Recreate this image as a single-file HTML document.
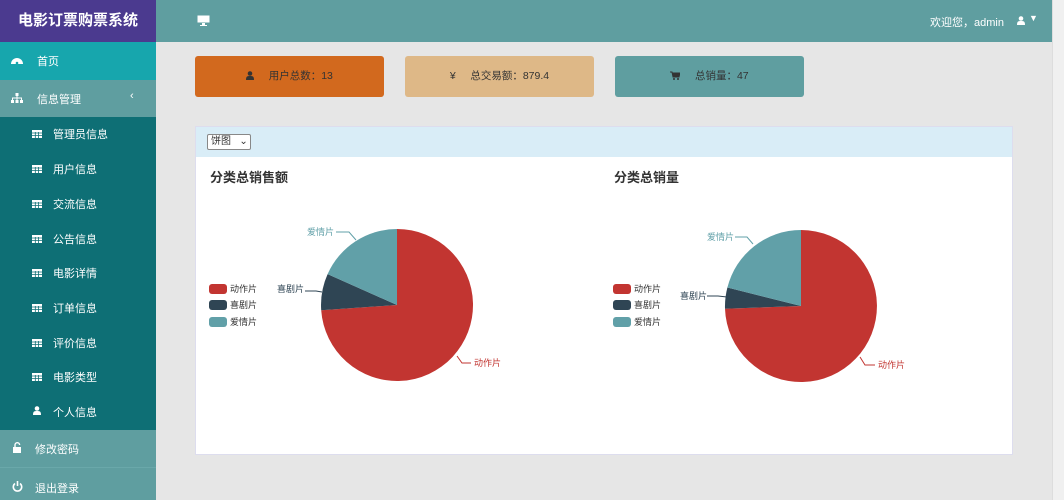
<!DOCTYPE html>
<html><head><meta charset="utf-8"><style>
*{margin:0;padding:0;box-sizing:border-box}
body{width:1064px;height:500px;overflow:hidden;background:#e6e6e6;font-family:"Liberation Sans","Noto Sans CJK SC",sans-serif;position:relative}
.side{position:absolute;left:0;top:0;width:156px;height:500px;background:#0e6f75}
.logo{height:42px;background:#4b3a8f;color:#fff;font-weight:bold;font-size:15px;line-height:42px;text-align:center}
.item{position:absolute;left:0;width:156px;color:#fff;font-size:11px}
.item span{position:absolute}
.item svg{position:absolute}
.top{position:absolute;left:156px;top:0;width:896px;height:42px;background:#5f9ea0;color:#fff;font-size:11px}
.scroll{position:absolute;left:1052px;top:0;width:12px;height:500px;background:#f0f0f0;border-left:1px solid #ddd}
.card{position:absolute;top:56px;width:189px;height:41px;border-radius:3px;font-size:10.5px;color:#333;text-align:center;line-height:41px}
.panel{position:absolute;left:195px;top:126px;width:818px;height:329px;background:#fff;border:1px solid #dde}
.ph{height:30px;background:#d9edf7}
.sel{position:absolute;left:11px;top:7px;width:44px;height:16px;border:1px solid #888;background:#fff;font-size:10px;color:#333;padding-left:3px;line-height:14px;border-radius:2px}
.tit{position:absolute;font-size:13px;font-weight:bold;color:#333}
</style></head><body>
<svg width="0" height="0" style="position:absolute">
<defs>
<g id="tb"><rect x="0" y="0" width="10" height="8" fill="#fff"/><path d="M0,3H10M0,5.5H10M3.3,2V8M6.6,2V8" stroke="#0e6f75" stroke-width="0.8"/></g>
<g id="us"><circle cx="4" cy="2.5" r="2.3" fill="#fff"/><path d="M0,9 C0,5 1.5,5 4,5 C6.5,5 8,5 8,9Z" fill="#fff"/></g>
</defs></svg>
<div class="side">
<div class="logo">电影订票购票系统</div>
<div class="item" style="top:42px;height:38px;background:#17a6ad"><svg style="left:11px;top:14px" width="12" height="9"><path d="M0,8 A6,6 0 0 1 12,8Z" fill="#fff"/><circle cx="6" cy="7" r="1.3" fill="#17a6ad"/></svg><span style="left:37px;top:11px">首页</span></div>
<div class="item" style="top:80px;height:37px;background:#5f9ea0"><svg style="left:11px;top:13px" width="12" height="10"><rect x="4.5" y="0" width="3" height="3" fill="#fff"/><rect x="0" y="7" width="3" height="3" fill="#fff"/><rect x="4.5" y="7" width="3" height="3" fill="#fff"/><rect x="9" y="7" width="3" height="3" fill="#fff"/><path d="M6,3V7M1.5,7V5H10.5V7" stroke="#fff" fill="none"/></svg><span style="left:37px;top:11px">信息管理</span><span style="left:130px;top:10px">‹</span></div>
<div class="item" style="top:126px"><svg style="left:32px;top:4px" width="10" height="8"><use href="#tb"/></svg><span style="left:53px">管理员信息</span></div>
<div class="item" style="top:161px"><svg style="left:32px;top:4px" width="10" height="8"><use href="#tb"/></svg><span style="left:53px">用户信息</span></div>
<div class="item" style="top:196px"><svg style="left:32px;top:4px" width="10" height="8"><use href="#tb"/></svg><span style="left:53px">交流信息</span></div>
<div class="item" style="top:231px"><svg style="left:32px;top:4px" width="10" height="8"><use href="#tb"/></svg><span style="left:53px">公告信息</span></div>
<div class="item" style="top:265px"><svg style="left:32px;top:4px" width="10" height="8"><use href="#tb"/></svg><span style="left:53px">电影详情</span></div>
<div class="item" style="top:300px"><svg style="left:32px;top:4px" width="10" height="8"><use href="#tb"/></svg><span style="left:53px">订单信息</span></div>
<div class="item" style="top:335px"><svg style="left:32px;top:4px" width="10" height="8"><use href="#tb"/></svg><span style="left:53px">评价信息</span></div>
<div class="item" style="top:369px"><svg style="left:32px;top:4px" width="10" height="8"><use href="#tb"/></svg><span style="left:53px">电影类型</span></div>
<div class="item" style="top:404px"><svg style="left:33px;top:2px" width="8" height="9"><use href="#us"/></svg><span style="left:53px">个人信息</span></div>
<div class="item" style="top:430px;height:37px;background:#5f9ea0"><svg style="left:13px;top:12px" width="9" height="11"><path d="M2,5V3A2.3,2.3 0 0 1 6.6,3" stroke="#fff" stroke-width="1.4" fill="none"/><rect x="0" y="5" width="8" height="6" fill="#fff"/></svg><span style="left:35px;top:11px">修改密码</span></div>
<div class="item" style="top:467px;height:33px;background:#5f9ea0;border-top:1px solid #6aa8aa"><svg style="left:12px;top:13px" width="11" height="11"><path d="M3,2.5A4.2,4.2 0 1 0 8,2.5" stroke="#fff" stroke-width="1.6" fill="none"/><path d="M5.5,0V5" stroke="#fff" stroke-width="1.6"/></svg><span style="left:35px;top:12px">退出登录</span></div>
</div>
<div class="top">
<svg style="position:absolute;left:41px;top:15px" width="13" height="11"><rect x="0.5" y="0.5" width="12" height="7" fill="#fff"/><rect x="5" y="8" width="3" height="2" fill="#fff"/><rect x="3" y="10" width="7" height="1" fill="#fff"/></svg>
<span style="position:absolute;left:774px;top:14px">欢迎您，admin</span>
<svg style="position:absolute;left:861px;top:16px" width="8" height="9"><use href="#us"/></svg>
<span style="position:absolute;left:873px;top:13px;font-size:9px">▼</span>
</div>
<div class="scroll"></div>
<div class="card" style="left:195px;background:#d2691e"><svg width="8" height="9" style="vertical-align:-1px"><circle cx="4" cy="2.5" r="2.3" fill="#333"/><path d="M0,9 C0,5 1.5,5 4,5 C6.5,5 8,5 8,9Z" fill="#333"/></svg> &nbsp;&nbsp;&nbsp;&nbsp;用户总数：13</div>
<div class="card" style="left:405px;background:#deb887">¥ &nbsp;&nbsp;&nbsp;&nbsp;总交易额：879.4</div>
<div class="card" style="left:615px;background:#5f9ea0"><svg width="10" height="9" style="vertical-align:-1px"><path d="M0,1H2L3,6H9L10,2H2.5" fill="#333" stroke="#333"/><circle cx="4" cy="8" r="1" fill="#333"/><circle cx="8" cy="8" r="1" fill="#333"/></svg> &nbsp;&nbsp;&nbsp;&nbsp;总销量：47</div>
<div class="panel">
<div class="ph"><div class="sel">饼图 &nbsp;&nbsp;⌄</div></div>
<div class="tit" style="left:14px;top:40px">分类总销售额</div>
<div class="tit" style="left:418px;top:40px">分类总销量</div>
</div>
<svg style="position:absolute;left:0;top:0" width="1064" height="500" font-family="Liberation Sans,Noto Sans CJK SC,sans-serif" font-size="9">
<path d="M397,305 L397,229 A76,76 0 1 1 321.2,310.3 Z" fill="#c23531"/>
<path d="M397,305 L321.2,310.3 A76,76 0 0 1 327.6,274.1 Z" fill="#2f4554"/>
<path d="M397,305 L327.6,274.1 A76,76 0 0 1 397,229 Z" fill="#61a0a8"/>
<path d="M801,306 L801,230 A76,76 0 1 1 725,308.7 Z" fill="#c23531"/>
<path d="M801,306 L725,308.7 A76,76 0 0 1 727.4,287.5 Z" fill="#2f4554"/>
<path d="M801,306 L727.4,287.5 A76,76 0 0 1 801,230 Z" fill="#61a0a8"/>
<g fill="none" stroke-width="1">
<path d="M336,232 H349 L356,240" stroke="#61a0a8"/>
<path d="M305,291 H316 L322,292" stroke="#2f4554"/>
<path d="M457,356 L462,363 H471" stroke="#c23531"/>
<path d="M735,237 H747 L753,244" stroke="#61a0a8"/>
<path d="M707,296 H718 L727,297" stroke="#2f4554"/>
<path d="M860,357 L865,365 H875" stroke="#c23531"/>
</g>
<text x="307" y="235" fill="#61a0a8">爱情片</text>
<text x="277" y="292" fill="#2f4554">喜剧片</text>
<text x="474" y="366" fill="#c23531">动作片</text>
<text x="707" y="240" fill="#61a0a8">爱情片</text>
<text x="680" y="299" fill="#2f4554">喜剧片</text>
<text x="878" y="368" fill="#c23531">动作片</text>
<g>
<rect x="209" y="284" width="18" height="10" rx="3" fill="#c23531"/><text x="230" y="292" fill="#333">动作片</text>
<rect x="209" y="300" width="18" height="10" rx="3" fill="#2f4554"/><text x="230" y="308" fill="#333">喜剧片</text>
<rect x="209" y="317" width="18" height="10" rx="3" fill="#61a0a8"/><text x="230" y="325" fill="#333">爱情片</text>
<rect x="613" y="284" width="18" height="10" rx="3" fill="#c23531"/><text x="634" y="292" fill="#333">动作片</text>
<rect x="613" y="300" width="18" height="10" rx="3" fill="#2f4554"/><text x="634" y="308" fill="#333">喜剧片</text>
<rect x="613" y="317" width="18" height="10" rx="3" fill="#61a0a8"/><text x="634" y="325" fill="#333">爱情片</text>
</g>
</svg>
</body></html>
